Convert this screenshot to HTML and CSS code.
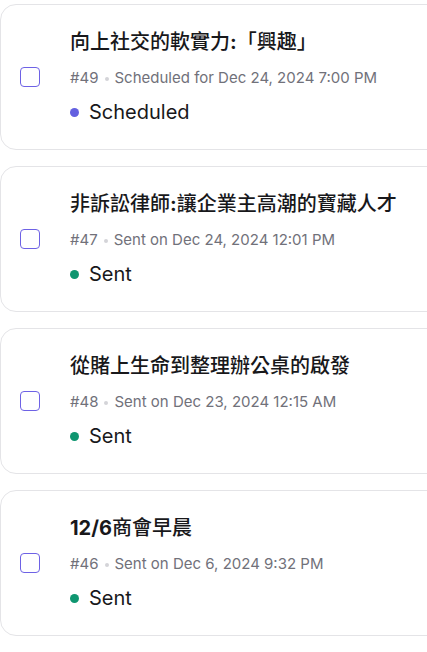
FILE: index.html
```html
<!DOCTYPE html>
<html lang="zh-Hant">
<head>
    <meta charset="UTF-8">
    <title>Newsletters</title>
    <link rel="stylesheet" href="styles.css">
</head>
<body>
<ul class="post-list">
    <li class="post">
        <span class="check"></span>
        <div class="post-body">
            <h3 class="post-title">向上社交的軟實力<b>:</b>「興趣」</h3>
            <p class="post-meta">#49<span class="sep"></span>Scheduled for Dec 24, 2024 7:00 PM</p>
            <p class="post-status"><span class="dot scheduled"></span>Scheduled</p>
        </div>
    </li>
    <li class="post">
        <span class="check"></span>
        <div class="post-body">
            <h3 class="post-title">非訴訟律師<b>:</b>讓企業主高潮的寶藏人才</h3>
            <p class="post-meta">#47<span class="sep"></span>Sent on Dec 24, 2024 12:01 PM</p>
            <p class="post-status"><span class="dot sent"></span>Sent</p>
        </div>
    </li>
    <li class="post">
        <span class="check"></span>
        <div class="post-body">
            <h3 class="post-title">從賭上生命到整理辦公桌的啟發</h3>
            <p class="post-meta">#48<span class="sep"></span>Sent on Dec 23, 2024 12:15 AM</p>
            <p class="post-status"><span class="dot sent"></span>Sent</p>
        </div>
    </li>
    <li class="post">
        <span class="check"></span>
        <div class="post-body">
            <h3 class="post-title"><b>12/6</b>商會早晨</h3>
            <p class="post-meta">#46<span class="sep"></span>Sent on Dec 6, 2024 9:32 PM</p>
            <p class="post-status"><span class="dot sent"></span>Sent</p>
        </div>
    </li>
    <li class="post">
        <span class="check"></span>
        <div class="post-body">
            <h3 class="post-title">&nbsp;</h3>
        </div>
    </li>
</ul>
</body>
</html>
```

FILE: styles.css
```css
* {
    margin: 0;
    padding: 0;
    box-sizing: border-box;
}

html, body {
    background: #fff;
    overflow: hidden;
}

body {
    font-family: Inter, "Noto Sans CJK TC", sans-serif;
    color: #18181b;
}

.post-list {
    list-style: none;
    display: flex;
    flex-direction: column;
    gap: 16px;
    padding-top: 4px;
    width: 470px;
}

.post {
    display: flex;
    align-items: center;
    gap: 30px;
    height: 146px;
    padding: 0 19px;
    border: 1px solid #e4e4e7;
    border-radius: 16px;
    background: #fff;
}

.check {
    flex: none;
    width: 20px;
    height: 20px;
    border: 1.5px solid #6e62e5;
    border-radius: 4px;
}

.post-body {
    display: flex;
    flex-direction: column;
}

.post-title {
    font-size: 20px;
    line-height: 28px;
    font-weight: 500;
    color: #18181b;
    margin-bottom: 12px;
    text-spacing-trim: space-all;
}

/* latin bits in titles render heavier than the CJK */
.post-title b {
    font-weight: 700;
}

.post-meta {
    font-size: 15px;
    line-height: 20px;
    color: #71717a;
    margin-bottom: 10px;
}

.sep {
    display: inline-block;
    width: 4px;
    height: 4px;
    border-radius: 50%;
    background: #d4d4d8;
    margin: 0 6px;
    vertical-align: middle;
}

.post-status {
    display: flex;
    align-items: center;
    gap: 10px;
    font-size: 20px;
    line-height: 28px;
}

.dot {
    width: 9px;
    height: 9px;
    border-radius: 50%;
}

.dot.scheduled {
    background: #6360e0;
}

.dot.sent {
    background: #0f9670;
}
```
